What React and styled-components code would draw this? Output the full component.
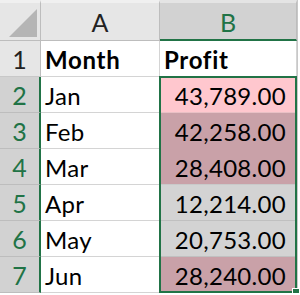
import React from "react";
import styled, { createGlobalStyle } from "styled-components";

const Global = createGlobalStyle`
  html, body { margin: 0; padding: 0; background: #fff; }
  body { font-family: Lato, "Liberation Sans", sans-serif; }
`;

const Sheet = styled.div`
  position: relative;
  display: grid;
  grid-template-columns: 41px 119px 137px;
  grid-template-rows: 41px repeat(7, 36px);
  width: 297px;
  border-right: 1px solid #c8c8c8;
`;

const Corner = styled.div`
  position: relative;
  background: #e6e6e6;
  border-right: 1px solid #bdbdbd;
  border-bottom: 1px solid #bdbdbd;
  border-top: 3px solid #f0f0f0;
  box-sizing: border-box;
`;

const Triangle = styled.div`
  position: absolute;
  right: 3px;
  bottom: 3px;
  width: 0;
  height: 0;
  border-left: 28px solid transparent;
  border-bottom: 28px solid #b5b5b5;
`;

const ColHead = styled.div`
  display: flex;
  align-items: center;
  justify-content: center;
  box-sizing: border-box;
  border-top: 3px solid ${p => (p.$sel ? "#e4e4e4" : "#f0f0f0")};
  background: ${p => (p.$sel ? "#d2d2d2" : "#e6e6e6")};
  color: ${p => (p.$sel ? "#217346" : "#222")};
  border-right: 1px solid #bdbdbd;
  border-bottom: ${p => (p.$sel ? "2px solid #217346" : "1px solid #bdbdbd")};
  font-size: 25px;
  padding-top: 1px;
`;

const RowHead = styled.div`
  display: flex;
  align-items: center;
  justify-content: center;
  box-sizing: border-box;
  background: ${p => (p.$sel ? "#d2d2d2" : "#e6e6e6")};
  color: ${p => (p.$sel ? "#217346" : "#222")};
  border-bottom: 1px solid ${p => (p.$sel ? "#bdbdbd" : "#c8c8c8")};
  border-right: ${p => (p.$sel ? "2px solid #217346" : "1px solid #bdbdbd")};
  font-size: 25px;
  padding-right: ${p => (p.$sel ? "0" : "1px")};
`;

const Cell = styled.div`
  display: flex;
  align-items: center;
  justify-content: ${p => (p.$num ? "flex-end" : "flex-start")};
  box-sizing: border-box;
  padding: 2px ${p => (p.$num ? "10px" : "0")} 0 ${p => (p.$num ? "0" : "4px")};
  background: ${p => p.$bg || "#fff"};
  border-right: 1px solid #d4d4d4;
  border-bottom: 1px solid ${p => p.$line || "#d4d4d4"};
  font-size: 24px;
  letter-spacing: ${p => (p.$bold ? "0.7px" : "0.3px")};
  font-weight: ${p => (p.$bold ? 700 : 400)};
  color: #000;
`;

const Selection = styled.div`
  position: absolute;
  left: 159px;
  top: 76px;
  width: 138px;
  height: 217px;
  box-sizing: border-box;
  border: 2px solid #217346;
  pointer-events: none;
`;

const Handle = styled.div`
  position: absolute;
  right: -5px;
  bottom: -5px;
  width: 6px;
  height: 6px;
  background: #217346;
  border: 1px solid #fff;
`;

const rows = [
  { m: "Jan", v: "43,789.00", bg: "#ffc7ce", line: "#e9c0c5" },
  { m: "Feb", v: "42,258.00", bg: "#c9a1a8", line: "#c9a1a8" },
  { m: "Mar", v: "28,408.00", bg: "#c9a1a8", line: "#c9c9c9" },
  { m: "Apr", v: "12,214.00", bg: "#d3d3d3", line: "#c0c0c0" },
  { m: "May", v: "20,753.00", bg: "#d3d3d3", line: "#c0c0c0" },
  { m: "Jun", v: "28,240.00", bg: "#c9a1a8", line: "#c9a1a8" },
];

export default function App() {
  return (
    <>
      <Global />
      <Sheet>
        <Corner>
          <Triangle />
        </Corner>
        <ColHead>A</ColHead>
        <ColHead $sel>B</ColHead>
        <RowHead>1</RowHead>
        <Cell $bold>Month</Cell>
        <Cell $bold>Profit</Cell>
        {rows.map((r, i) => (
          <React.Fragment key={r.m}>
            <RowHead $sel>{i + 2}</RowHead>
            <Cell>{r.m}</Cell>
            <Cell $num $bg={r.bg} $line={r.line}>
              {r.v}
            </Cell>
          </React.Fragment>
        ))}
        <Selection>
          <Handle />
        </Selection>
      </Sheet>
    </>
  );
}
